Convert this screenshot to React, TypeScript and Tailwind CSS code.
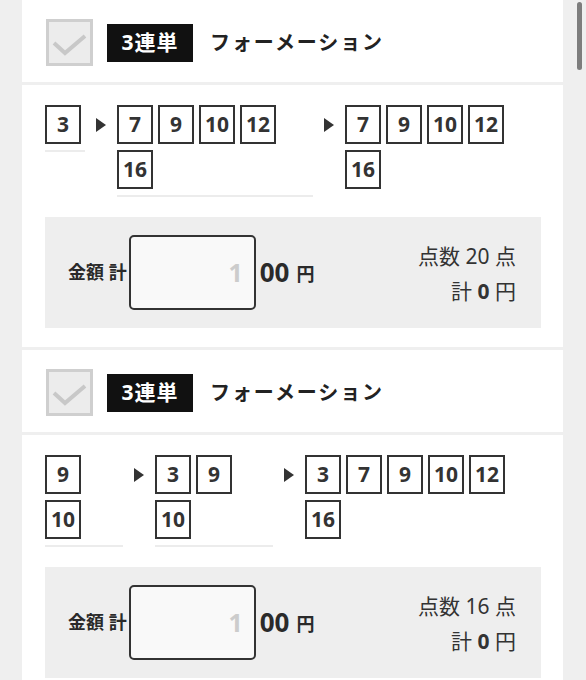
import React from 'react';

interface Column {
  rows: number[][];
  width: string;
  line: boolean;
}

interface Ticket {
  cols: Column[];
  points: number;
}

const tickets: Ticket[] = [
  {
    cols: [
      { rows: [[3]], width: 'w-[40px]', line: true },
      { rows: [[7, 9, 10, 12], [16]], width: 'w-[196px]', line: true },
      { rows: [[7, 9, 10, 12], [16]], width: 'w-[196px]', line: false },
    ],
    points: 20,
  },
  {
    cols: [
      { rows: [[9], [10]], width: 'w-[78px]', line: true },
      { rows: [[3, 9], [10]], width: 'w-[118px]', line: true },
      { rows: [[3, 7, 9, 10, 12], [16]], width: 'w-[210px]', line: false },
    ],
    points: 16,
  },
];

const CheckBox = () => (
  <div className="w-[47px] h-[47px] border-[3px] border-[#cfcfcf] bg-[#ececec] shrink-0">
    <svg width="41" height="41" viewBox="0 0 41 41">
      <polyline points="5,21 16,31 36,14" fill="none" stroke="#c8c8c8" strokeWidth="4" />
    </svg>
  </div>
);

const Arrow = () => (
  <div className="h-[39px] w-[10px] mx-[11px] flex items-center shrink-0">
    <svg width="10" height="14" viewBox="0 0 10 14">
      <polygon points="0,0 10,7 0,14" fill="#333" />
    </svg>
  </div>
);

const NumBox: React.FC<{ n: number }> = ({ n }) => (
  <div className="w-[36px] h-[39px] border-2 border-[#333] flex items-center justify-center text-[21px] font-bold text-[#333] leading-none">
    {n}
  </div>
);

const Horse: React.FC<{ col: Column }> = ({ col }) => (
  <div className={`${col.width} shrink-0 flex flex-col gap-[6px] pb-[6px] border-b-2 ${col.line ? 'border-[#ececec]' : 'border-transparent'}`}>
    {col.rows.map((row, i) => (
      <div key={i} className="flex gap-[5px]">
        {row.map(n => <NumBox key={n} n={n} />)}
      </div>
    ))}
  </div>
);

const Card: React.FC<{ ticket: Ticket }> = ({ ticket }) => (
  <div className="flex flex-col gap-[3px]">
    <div className="bg-white h-[82px] pt-[19px] pl-[24px] flex items-start">
      <div className="flex items-center">
        <CheckBox />
        <div className="ml-[14px] w-[86px] h-[38px] bg-[#111] text-white text-[21px] font-bold flex items-center justify-center tracking-[1px]">
          3連単
        </div>
        <div className="ml-[17px] text-[20px] font-bold text-[#222] tracking-[1.9px]">フォーメーション</div>
      </div>
    </div>
    <div className="bg-white pt-[20px] pb-[19px] pl-[23px] pr-[22px]">
      <div className="flex items-start">
        {ticket.cols.map((col, i) => (
          <React.Fragment key={i}>
            {i > 0 && <Arrow />}
            <Horse col={col} />
          </React.Fragment>
        ))}
      </div>
      <div className="mt-[20px] h-[111px] bg-[#eeeeee] flex items-center justify-between pl-[23px] pr-[25px]">
        <div className="flex items-center text-[#2a2a2a]">
          <span className="text-[18px] font-bold">金額 計</span>
          <div className="ml-[2px] w-[127px] h-[75px] border-2 border-[#333] rounded-[5px] bg-[#f9f9f9] flex items-center justify-end pr-[11px] text-[25px] font-bold text-[#cccccc]">
            1
          </div>
          <span className="ml-[4px] text-[26px] font-bold">00</span>
          <span className="ml-[7px] text-[18px] font-bold mt-[4px]">円</span>
        </div>
        <div className="flex flex-col items-end text-[21px] text-[#333] leading-[35px] mt-[3px]">
          <div>点数 {ticket.points} 点</div>
          <div>計 <span className="font-bold">0</span> 円</div>
        </div>
      </div>
    </div>
  </div>
);

export default function App() {
  return (
    <div className="relative h-[680px] overflow-hidden bg-[#efefef] font-['Noto_Sans','Noto_Sans_CJK_JP',sans-serif]">
      <div className="pl-[22px] pr-[23px] flex flex-col gap-[3px]">
        {tickets.map((t, i) => <Card key={i} ticket={t} />)}
      </div>
      <div className="absolute right-[4px] top-[2px] w-[5px] h-[68px] rounded-full bg-[#7d7d7d]" />
    </div>
  );
}
